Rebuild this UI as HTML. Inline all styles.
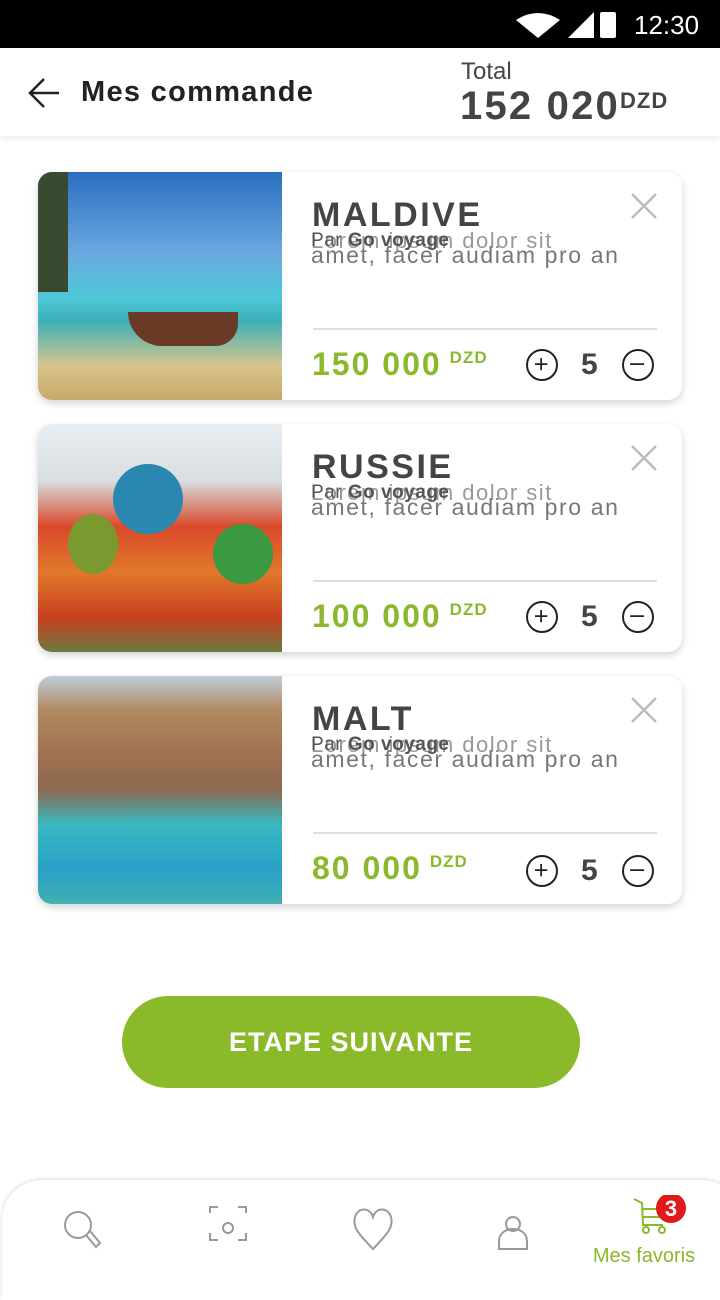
<!DOCTYPE html>
<html><head><meta charset="utf-8"><style>
*{margin:0;padding:0;box-sizing:border-box}
body{width:720px;height:1280px;overflow:hidden;background:#fff;font-family:"Liberation Sans",sans-serif;position:relative}
.abs{position:absolute}
.card{position:absolute;left:38px;width:644px;height:228px;background:#fff;border-radius:14px;box-shadow:0 3px 8px rgba(0,0,0,.18);overflow:hidden}
.img{position:absolute;left:0;top:0;width:244px;height:228px}
.t{position:absolute;left:274px;top:24px;font-size:34px;font-weight:bold;color:#444;letter-spacing:2.5px}
.s1{position:absolute;left:273px;top:58px;font-size:19px;color:#555;white-space:nowrap;letter-spacing:.5px}
.s2{position:absolute;left:273px;top:70px;font-size:23px;color:#777;white-space:nowrap;letter-spacing:1.6px}
.s3{position:absolute;left:273px;top:56px;font-size:22px;color:#999;white-space:nowrap;letter-spacing:1.5px}
.hr{position:absolute;left:275px;top:156px;width:344px;height:2px;background:#ddd}
.p{position:absolute;left:274px;top:174px;font-size:32px;font-weight:bold;color:#8ab92d;letter-spacing:2px}
.p sup{font-size:17px;vertical-align:top;position:relative;top:2px;margin-left:8px;font-weight:bold;letter-spacing:1px}
.c{position:absolute;top:177px;width:32px;height:32px;border:2px solid #222;border-radius:50%}
.n{position:absolute;left:543px;top:176px;font-size:30px;font-weight:bold;color:#444}
.x{position:absolute;left:592px;top:20px}
</style></head><body>
<div class="abs" style="left:0;top:0;width:720px;height:48px;background:#000"></div>
<svg class="abs" style="left:510px;top:8px" width="200" height="32">
<path d="M6 12 Q28 -2 50 12 L28 30Z" fill="#fff"/>
<path d="M84 4 L84 30 L58 30Z" fill="#fff"/>
<rect x="90" y="4" width="16" height="26" rx="2" fill="#fff"/>
<text x="124" y="26" fill="#fff" font-size="26" font-family="Liberation Sans">12:30</text></svg>
<div class="abs" style="left:0;top:48px;width:720px;height:88px;background:#fff;box-shadow:0 2px 6px rgba(0,0,0,.08)"></div>
<svg class="abs" style="left:28px;top:76px" width="34" height="34"><path d="M31 17H3M16 3L2 17L16 31" stroke="#222" stroke-width="2.5" fill="none"/></svg>
<div class="abs" style="left:81px;top:76px;font-size:29px;font-weight:bold;color:#222;letter-spacing:1.3px">Mes commande</div>
<div class="abs" style="left:461px;top:58px;font-size:24px;color:#444">Total</div>
<div class="abs" style="left:460px;top:84px;font-size:40px;font-weight:bold;color:#444;letter-spacing:2.2px">152 020<span style="font-size:22px;vertical-align:top;position:relative;top:4px;letter-spacing:1px">DZD</span></div>

<div class="card" style="top:172px">
<div class="img" style="background:linear-gradient(180deg,#2a6fc0 0%,#6aa7e0 35%,#4fc8d8 55%,#3ab0b8 65%,#d9c58c 85%,#c6a86a 100%)"><div class="abs" style="left:0;top:0;width:30px;height:120px;background:#3a4a30"></div><div class="abs" style="left:90px;top:140px;width:110px;height:34px;background:#6a3a26;border-radius:0 0 40px 60px"></div></div>
<div class="t">MALDIVE</div><div class="s3">Lorem ipsum dolor sit</div><div class="s1">Par <b>Go voyage</b></div><div class="s2">amet, facer audiam pro an</div>
<div class="hr"></div><div class="p">150 000<sup>DZD</sup></div>
<svg class="c" style="left:488px" viewBox="0 0 32 32"><path d="M8 15H22M15 8V22" stroke="#222" stroke-width="2"/></svg>
<div class="n">5</div>
<svg class="c" style="left:584px" viewBox="0 0 32 32"><path d="M7 15H23" stroke="#222" stroke-width="2"/></svg>
<svg class="x" width="28" height="28"><path d="M2 2L26 26M26 2L2 26" stroke="#bbb" stroke-width="2.5"/></svg>
</div>

<div class="card" style="top:424px">
<div class="img" style="background:linear-gradient(180deg,#e8eef2 0%,#d8dde0 25%,#d94a2a 45%,#e0782a 65%,#c84020 85%,#6a7a40 100%)"><div class="abs" style="left:75px;top:40px;width:70px;height:70px;border-radius:50%;background:#2a88b0"></div><div class="abs" style="left:30px;top:90px;width:50px;height:60px;border-radius:50%;background:#7a9a30"></div><div class="abs" style="left:175px;top:100px;width:60px;height:60px;border-radius:50%;background:#3a9a40"></div></div>
<div class="t">RUSSIE</div><div class="s3">Lorem ipsum dolor sit</div><div class="s1">Par <b>Go voyage</b></div><div class="s2">amet, facer audiam pro an</div>
<div class="hr"></div><div class="p">100 000<sup>DZD</sup></div>
<svg class="c" style="left:488px" viewBox="0 0 32 32"><path d="M8 15H22M15 8V22" stroke="#222" stroke-width="2"/></svg>
<div class="n">5</div>
<svg class="c" style="left:584px" viewBox="0 0 32 32"><path d="M7 15H23" stroke="#222" stroke-width="2"/></svg>
<svg class="x" width="28" height="28"><path d="M2 2L26 26M26 2L2 26" stroke="#bbb" stroke-width="2.5"/></svg>
</div>

<div class="card" style="top:676px">
<div class="img" style="background:linear-gradient(180deg,#c0ccd8 0%,#b08a60 15%,#a07050 35%,#8a6a50 50%,#3ab8c0 65%,#2aa0c8 85%,#40b0b0 100%)"></div>
<div class="t">MALT</div><div class="s3">Lorem ipsum dolor sit</div><div class="s1">Par <b>Go voyage</b></div><div class="s2">amet, facer audiam pro an</div>
<div class="hr"></div><div class="p">80 000<sup>DZD</sup></div>
<svg class="c" style="left:488px;top:179px" viewBox="0 0 32 32"><path d="M8 15H22M15 8V22" stroke="#222" stroke-width="2"/></svg>
<div class="n" style="top:178px">5</div>
<svg class="c" style="left:584px;top:179px" viewBox="0 0 32 32"><path d="M7 15H23" stroke="#222" stroke-width="2"/></svg>
<svg class="x" width="28" height="28"><path d="M2 2L26 26M26 2L2 26" stroke="#bbb" stroke-width="2.5"/></svg>
</div>

<div class="abs" style="left:122px;top:996px;width:458px;height:92px;border-radius:46px;background:#8aba2a;color:#fff;font-size:27px;font-weight:bold;text-align:center;line-height:92px;letter-spacing:1px">ETAPE SUIVANTE</div>

<div class="abs" style="left:2px;top:1180px;width:740px;height:120px;background:#fff;border-radius:40px 40px 0 0;box-shadow:0 -1px 4px rgba(0,0,0,.15)"></div>
<svg class="abs" style="left:0;top:1195px" width="720" height="85" fill="none" stroke="#999" stroke-width="2">
<circle cx="78" cy="30" r="13"/><path d="M86 40L96 52L100 48L90 36"/>
<path d="M210 18V12H218M238 12H246V18M246 38V45H238M218 45H210V38"/><circle cx="228" cy="33" r="5"/>
<path d="M373 54C360 40 352 33 355 22C358 12 370 12 373 22C376 12 388 12 391 22C394 33 386 40 373 54Z"/>
<circle cx="513" cy="29" r="7"/><path d="M499 54V46C499 38 506 34 513 34C520 34 527 38 527 46V54Z"/>
<path d="M634 4L642 8L643 30H663" stroke="#8aba2a"/><path d="M642 14H664M642 22H664" stroke="#8aba2a"/><circle cx="646" cy="35" r="3" stroke="#8aba2a"/><circle cx="662" cy="35" r="3" stroke="#8aba2a"/>
<circle cx="671" cy="13" r="15" fill="#e01a1a" stroke="none"/>
<text x="671" y="21" fill="#fff" stroke="none" font-size="22" font-weight="bold" text-anchor="middle" font-family="Liberation Sans">3</text>
<text x="644" y="67" fill="#8aba2a" stroke="none" font-size="20" text-anchor="middle" font-family="Liberation Sans">Mes favoris</text>
</svg>
</body></html>
